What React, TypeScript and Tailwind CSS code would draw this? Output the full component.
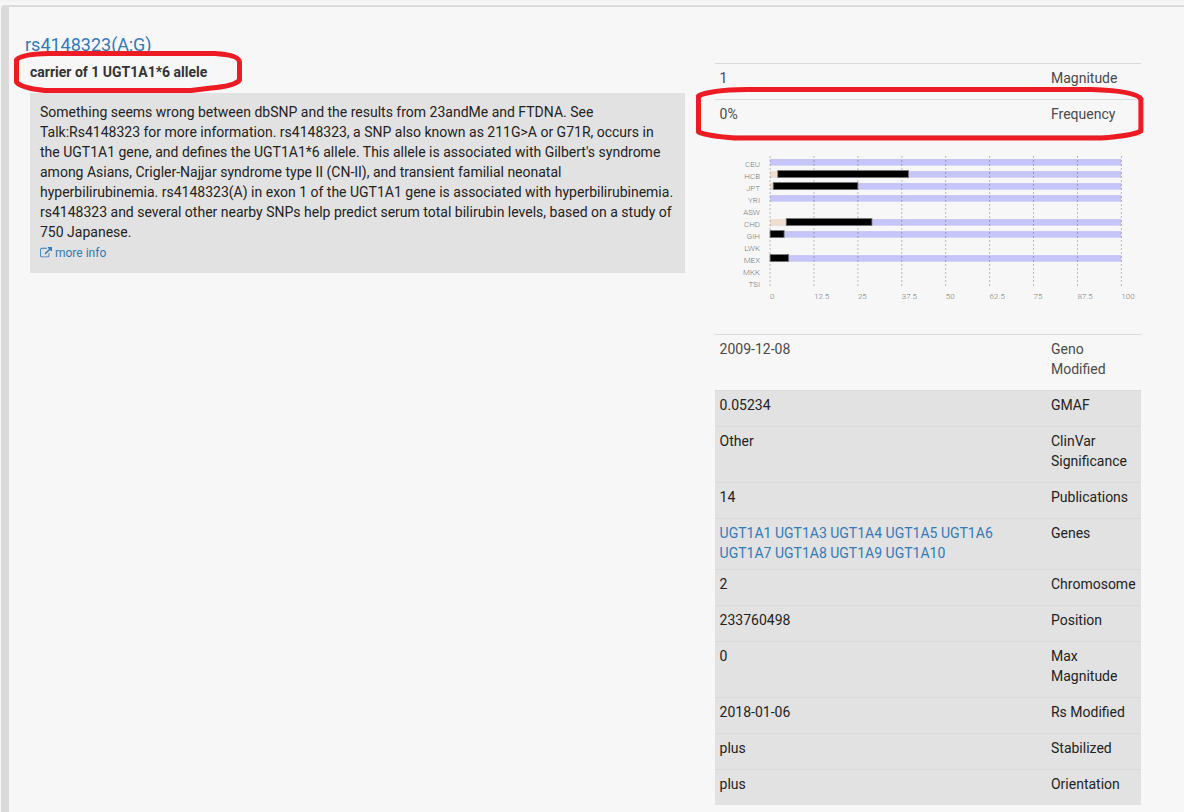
import type { ReactNode } from "react";

interface Population {
  name: string;
  // first two shares in percent, the rest fills up to 100. null = no data
  split: [number, number] | null;
}

const populations: Population[] = [
  { name: "CEU", split: [0, 0] },
  { name: "HCB", split: [2.2, 37.2] },
  { name: "JPT", split: [0.9, 24.1] },
  { name: "YRI", split: [0, 0] },
  { name: "ASW", split: null },
  { name: "CHD", split: [4.6, 24.4] },
  { name: "GIH", split: [0, 4] },
  { name: "LWK", split: null },
  { name: "MEX", split: [0, 5.3] },
  { name: "MKK", split: null },
  { name: "TSI", split: null },
];

const ticks = [0, 12.5, 25, 37.5, 50, 62.5, 75, 87.5, 100];

const genes = [
  "UGT1A1",
  "UGT1A3",
  "UGT1A4",
  "UGT1A5",
  "UGT1A6",
  "UGT1A7",
  "UGT1A8",
  "UGT1A9",
  "UGT1A10",
];

const PLOT_X = 50;
const PLOT_W = 351;

const scale = (value: number) => (value / 100) * PLOT_W;

const PopulationChart = () => {
  return (
    <svg
      viewBox="0 0 416 183"
      className="block w-full"
      fontFamily="Roboto, sans-serif"
      fontSize="8"
      fontWeight="300"
      fill="#777"
    >
      {populations.map(({ name, split }, i) => {
        const y = 18 + i * 12;
        return (
          <g key={name}>
            <text x="40" y={y + 8} textAnchor="end">
              {name}
            </text>
            {split && (
              <>
                <rect x={PLOT_X} y={y} width={PLOT_W} height="6.6" fill="#c5c5f8" />
                {split[0] > 0 && (
                  <rect x={PLOT_X} y={y} width={scale(split[0])} height="6.6" fill="#f0dfd0" />
                )}
              </>
            )}
          </g>
        );
      })}
      {ticks.map((tick) => (
        <g key={tick}>
          <line
            x1={PLOT_X + scale(tick)}
            x2={PLOT_X + scale(tick)}
            y1="15"
            y2="146"
            stroke="#000"
            strokeOpacity="0.25"
            strokeDasharray="2 2"
          />
          <text x={PLOT_X + scale(tick)} y="158">
            {tick}
          </text>
        </g>
      ))}
      {populations.map(
        ({ name, split }, i) =>
          split &&
          split[1] > 0 && (
            <rect
              key={name}
              x={PLOT_X + scale(split[0])}
              y={17.5 + i * 12}
              width={scale(split[1])}
              height="7"
              fill="#000"
              stroke="#777"
              strokeWidth="0.8"
            />
          ),
      )}
    </svg>
  );
};

interface RowProps {
  label: string;
  shaded?: boolean;
  children: ReactNode;
}

const Row = ({ label, shaded, children }: RowProps) => {
  return (
    <tr className={shaded ? "bg-[#e2e2e2] text-[#222]" : "text-[#4a4a4a]"}>
      <td className="border-t border-[#dadada] px-[5px] pt-1 pb-[11px] align-top">{children}</td>
      <th
        scope="row"
        className="w-[95px] border-t border-[#dadada] px-[5px] pt-1 pb-[11px] text-left align-top font-normal"
      >
        {label}
      </th>
    </tr>
  );
};

const App = () => {
  return (
    <div className="min-h-screen bg-[#f7f7f7] pl-px font-[Roboto,sans-serif] text-sm leading-5">
      <div className="h-[5px] bg-linear-to-b from-[#f1f1f1] to-[#fafafa]" />
      <div className="min-h-screen rounded-tl border-t-2 border-l-8 border-[#dadada] pt-7 pr-7 pl-[6px]">
        <h4 className="pl-[10px] text-lg leading-5">
          <a href="#rs4148323" className="text-[#337ab7]">
            rs4148323(A;G)
          </a>
        </h4>

        <div className="grid grid-cols-[3fr_2fr] pt-[7px]">
          <div className="relative px-[15px]">
            <p className="font-bold text-[#333]">carrier of 1 UGT1A1*6 allele</p>
            <div className="mt-[11px] bg-[#e2e2e2] px-[10px] pt-[9px] pb-[10px] text-[#222]">
              <p>
                Something seems wrong between dbSNP and the results from 23andMe and FTDNA. See
                Talk:Rs4148323 for more information. rs4148323, a SNP also known as 211G&gt;A or
                G71R, occurs in the UGT1A1 gene, and defines the UGT1A1*6 allele. This allele is
                associated with Gilbert's syndrome among Asians, Crigler-Najjar syndrome type II
                (CN-II), and transient familial neonatal hyperbilirubinemia. rs4148323(A) in exon 1
                of the UGT1A1 gene is associated with hyperbilirubinemia. rs4148323 and several
                other nearby SNPs help predict serum total bilirubin levels, based on a study of 750
                Japanese.
              </p>
              <a
                href="#more"
                className="flex items-center gap-[3px] pt-px text-xs leading-5 text-[#337ab7]"
              >
                <svg viewBox="0 0 1792 1792" className="size-3" fill="currentColor">
                  <path d="M1408 928v320q0 119-84.500 203.500t-203.500 84.500h-832q-119 0-203.500-84.500t-84.500-203.500v-832q0-119 84.500-203.500t203.500-84.500h704q14 0 23 9t9 23v64q0 14-9 23t-23 9h-704q-66 0-113 47t-47 113v832q0 66 47 113t113 47h832q66 0 113-47t47-113v-320q0-14 9-23t23-9h64q14 0 23 9t9 23zM1792 64v512q0 26-19 45t-45 19-45-19l-176-176-652 652q-10 10-23 10t-23-10l-114-114q-10-10-10-23t10-23l652-652-176-176q-19-19-19-45t19-45 45-19h512q26 0 45 19t19 45z" />
                </svg>
                more info
              </a>
            </div>
            {/* red pen mark round the summary */}
            <svg
              viewBox="0 0 230 46"
              className="pointer-events-none absolute -top-[13px] -left-[2px] w-[230px]"
              fill="none"
              stroke="#ed1c24"
              strokeWidth="5"
              strokeLinejoin="round"
            >
              <path d="M36 4.500H202Q226 6 226.500 13V31Q222 37 198 39L178 41.500H32Q8 39 3.500 33V11Q8 5 36 4.500Z" />
            </svg>
          </div>

          <div className="relative px-[15px] pt-px">
            <table className="w-full border-separate border-spacing-0">
              <tbody>
                <Row label="Magnitude">1</Row>
                <Row label="Frequency">0%</Row>
                <tr>
                  <td colSpan={2} className="border-t border-[#dadada] px-[5px] pt-[5px] pb-[10px]">
                    <PopulationChart />
                  </td>
                </tr>
                <Row label="Geno Modified">2009-12-08</Row>
                <Row label="GMAF" shaded>
                  0.05234
                </Row>
                <Row label="ClinVar Significance" shaded>
                  Other
                </Row>
                <Row label="Publications" shaded>
                  14
                </Row>
                <tr className="bg-[#e2e2e2] text-[#222]">
                  <td className="border-t border-[#dadada] px-[5px] pt-1 pb-[6px] align-top">
                    {genes.map((gene) => (
                      <span key={gene}>
                        <a href={`#${gene}`} className="text-[#337ab7]">
                          {gene}
                        </a>{" "}
                      </span>
                    ))}
                  </td>
                  <th
                    scope="row"
                    className="border-t border-[#dadada] px-[5px] pt-1 pb-[6px] text-left align-top font-normal"
                  >
                    Genes
                  </th>
                </tr>
                <Row label="Chromosome" shaded>
                  2
                </Row>
                <Row label="Position" shaded>
                  233760498
                </Row>
                <Row label="Max Magnitude" shaded>
                  0
                </Row>
                <Row label="Rs Modified" shaded>
                  2018-01-06
                </Row>
                <Row label="Stabilized" shaded>
                  plus
                </Row>
                <Row label="Orientation" shaded>
                  plus
                </Row>
              </tbody>
            </table>
            {/* red pen mark round the frequency row */}
            <div className="pointer-events-none absolute top-[23px] right-[11px] -left-[5px]">
              <svg
                viewBox="0 0 450 56"
                preserveAspectRatio="none"
                className="block h-14 w-full"
                fill="none"
                stroke="#ed1c24"
                strokeWidth="5"
                strokeLinejoin="round"
              >
                <path d="M52 4.500H396Q441 6 445.500 14V46Q436 51 406 53H40Q12 51 3.500 47V11Q14 5 52 4.500Z" />
              </svg>
            </div>
          </div>
        </div>
      </div>
    </div>
  );
};

export default App;
